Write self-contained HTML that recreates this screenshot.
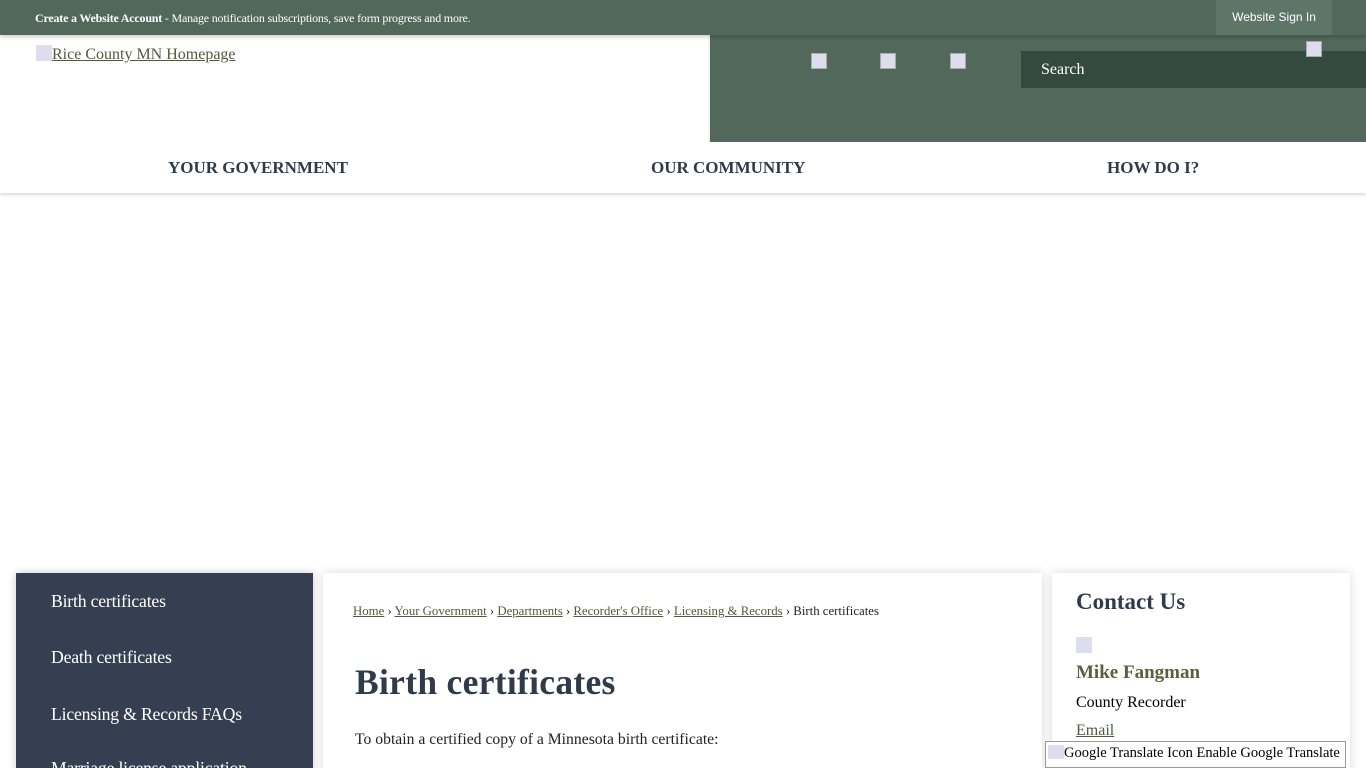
<!DOCTYPE html>
<html><head><meta charset="utf-8"><style>
*{box-sizing:border-box;margin:0;padding:0}
html,body{width:1366px;height:768px;overflow:hidden}
body{background:#fff;font-family:"Liberation Serif",serif;position:relative}
.top{position:absolute;left:0;top:0;width:1366px;height:35px;background:#51685a;box-shadow:0 2px 4px rgba(0,0,0,.2);z-index:3}
.top .msg{position:absolute;left:35px;top:11px;font-size:12px;color:#fff;letter-spacing:-.2px}
.top .sign{position:absolute;left:1216px;top:0;width:116px;height:35px;background:#5f7568;color:#fff;font:12px "Liberation Sans",sans-serif;text-align:center;line-height:35px}
.logo{position:absolute;left:36px;top:45px;font-size:16px;color:#4f5b3a;text-decoration:underline}
.logo i{display:inline-block;width:16px;height:16px;background:#dde;vertical-align:-2px}
.hdr{position:absolute;left:710px;top:35px;width:656px;height:107px;background:#51685a;box-shadow:0 2px 4px rgba(0,0,0,.15)}
.search{position:absolute;left:1021px;top:51px;width:345px;height:37px;background:#344a3f;color:#fff;font-size:16px;padding:10px 20px}
.ic{position:absolute;top:53px;width:16px;height:16px;background:#dde;border:1px solid #aaa}
.nav{position:absolute;left:0;top:142px;width:1366px;height:51px;background:#fff;box-shadow:0 2px 3px rgba(0,0,0,.15);font-weight:bold;font-size:17px;color:#2f3b4b}
.nav span{position:absolute;top:16px}
.side{position:absolute;left:16px;top:573px;width:297px;height:200px;background:#343f52;box-shadow:0 0 8px rgba(0,0,0,.2);overflow:hidden}
.side div{position:absolute;left:35px;color:#fff;font-size:17.7px;letter-spacing:-.2px;white-space:nowrap}
.main{position:absolute;left:323px;top:573px;width:719px;height:200px;background:#fff;box-shadow:0 0 10px rgba(0,0,0,.15)}
.bc{position:absolute;left:30px;top:31px;font-size:12.8px;color:#222;white-space:nowrap}
.bc a{color:#4f5b3a;text-decoration:underline}
h1{position:absolute;left:32px;top:88px;font-size:35.5px;color:#2f3b4b;letter-spacing:.3px}
.p{position:absolute;left:32px;top:158px;font-size:15.7px;color:#222}
.contact{position:absolute;left:1052px;top:573px;width:298px;height:200px;background:#fff;box-shadow:0 0 10px rgba(0,0,0,.15)}
.contact h2{position:absolute;left:24px;top:16px;font-size:23px;color:#2f3b4b}
.gt{position:absolute;left:1045px;top:741px;width:301px;height:27px;background:#fff;border:1px solid #999;font-size:14.5px;padding:3px 2px;white-space:nowrap;overflow:hidden}
</style></head><body>
<div class="top"><span class="msg"><b>Create a Website Account</b> - Manage notification subscriptions, save form progress and more.</span><div class="sign">Website Sign In</div></div>
<a class="logo"><i></i>Rice County MN Homepage</a>
<div class="hdr"></div>
<div class="ic" style="left:811px"></div><div class="ic" style="left:880px"></div><div class="ic" style="left:950px"></div>
<div class="search">Search</div>
<div class="ic" style="left:1306px;top:41px"></div>
<div class="nav"><span style="left:168px">YOUR GOVERNMENT</span><span style="left:651px">OUR COMMUNITY</span><span style="left:1107px">HOW DO I?</span></div>
<div class="side"><div style="top:18px">Birth certificates</div><div style="top:74px">Death certificates</div><div style="top:131px">Licensing &amp; Records FAQs</div><div style="top:185px">Marriage license application</div></div>
<div class="main"><div class="bc"><a>Home</a> › <a>Your Government</a> › <a>Departments</a> › <a>Recorder's Office</a> › <a>Licensing &amp; Records</a> › Birth certificates</div>
<h1>Birth certificates</h1><div class="p">To obtain a certified copy of a Minnesota birth certificate:</div></div>
<div class="contact"><h2>Contact Us</h2>
<div style="position:absolute;left:24px;top:64px;width:16px;height:16px;background:#dde"></div>
<div style="position:absolute;left:24px;top:89px;font-size:19px;font-weight:bold;color:#5a5f3f">Mike Fangman</div>
<div style="position:absolute;left:24px;top:121px;font-size:16px">County Recorder</div>
<div style="position:absolute;left:24px;top:149px;font-size:16px;color:#4f5b3a;text-decoration:underline">Email</div></div>
<div class="gt"><i style="display:inline-block;width:16px;height:14px;background:#dde;vertical-align:-2px"></i>Google Translate Icon Enable Google Translate</div>
</body></html>
